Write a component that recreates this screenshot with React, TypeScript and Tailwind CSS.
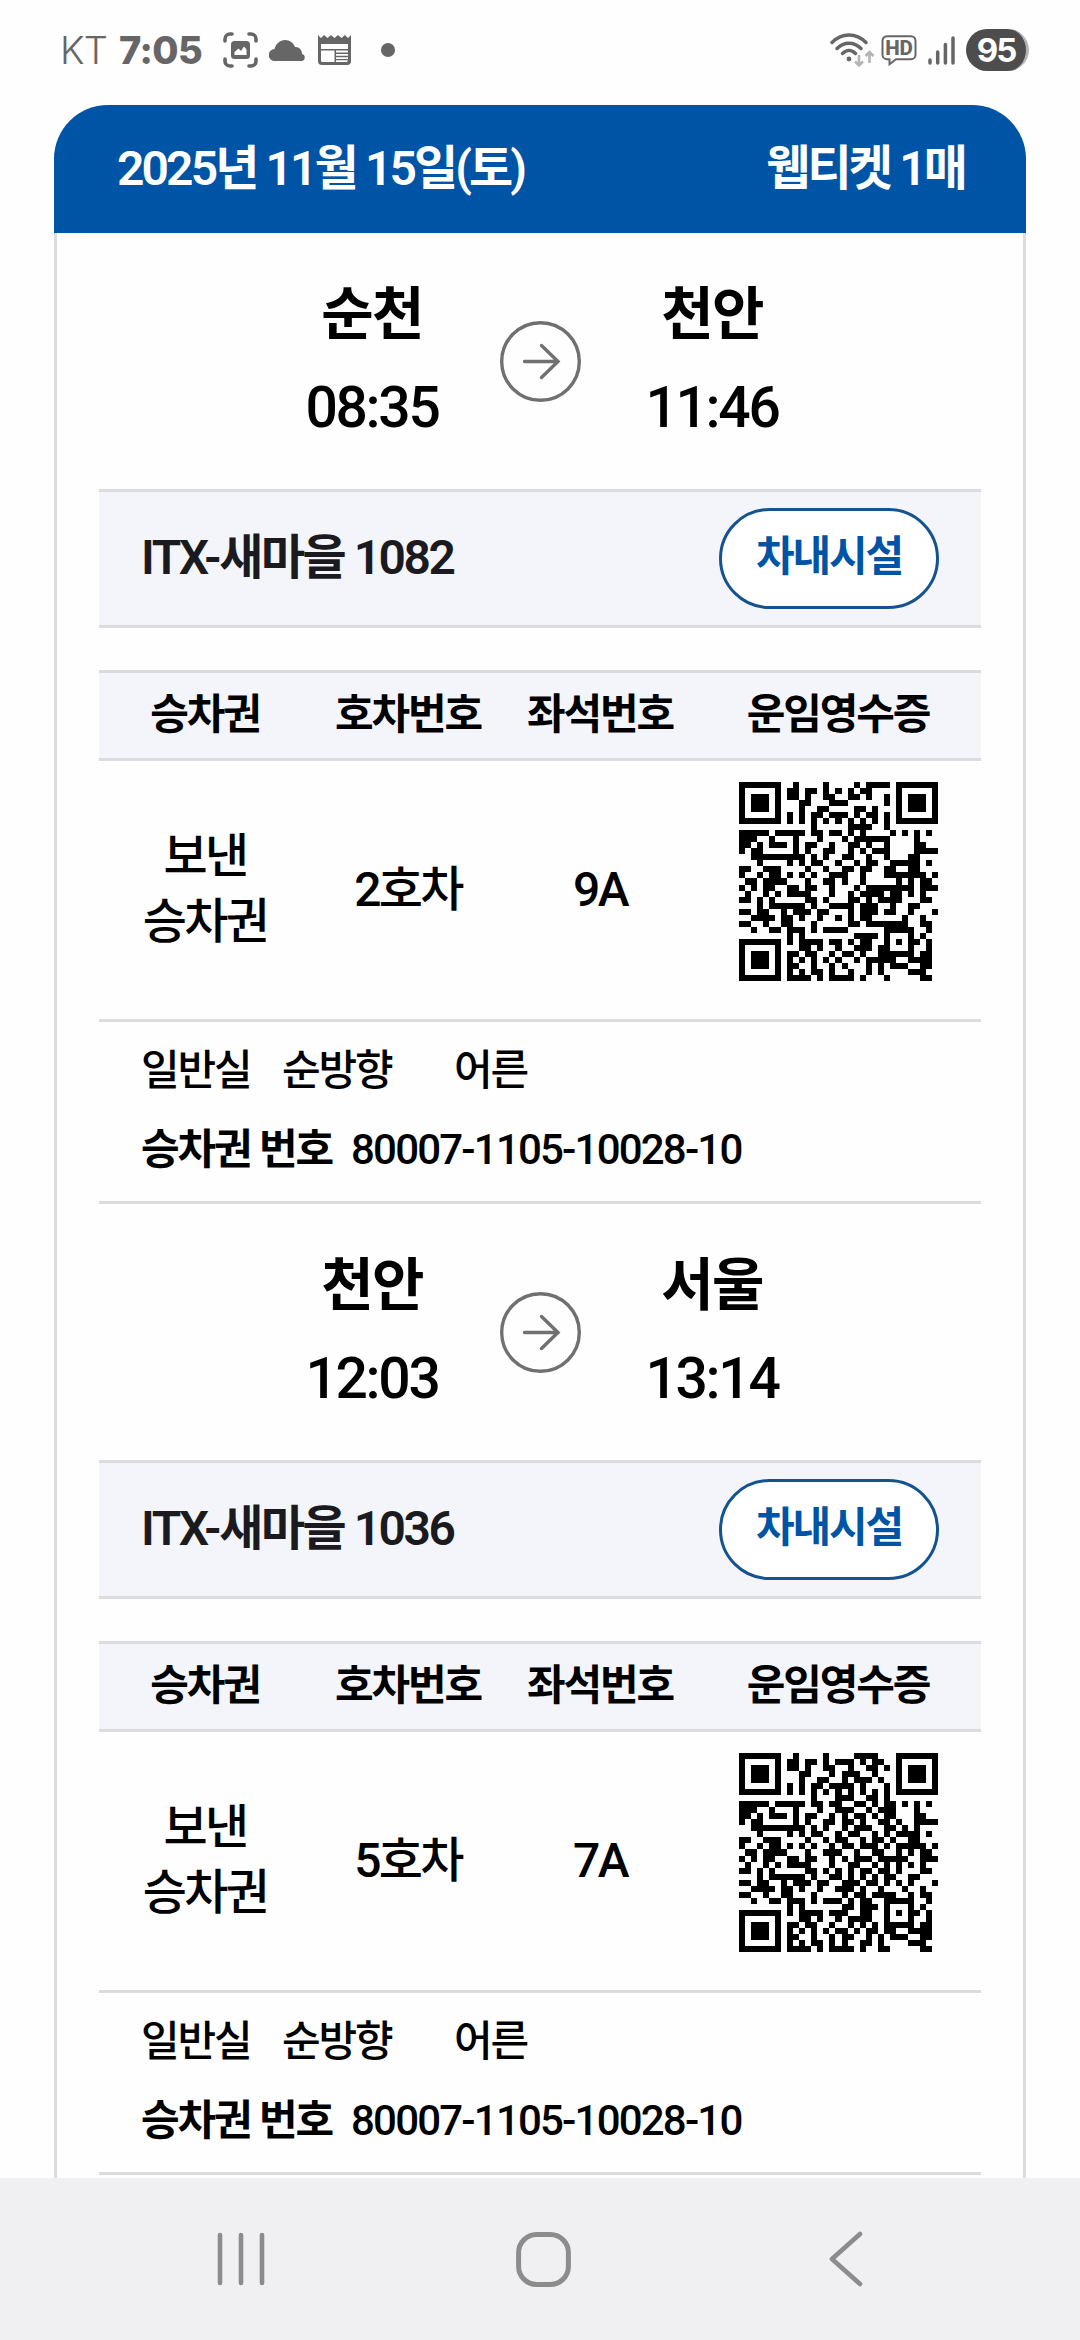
import React from "react";

type Ticket = {
  from: string;
  departure: string;
  to: string;
  arrival: string;
  train: string;
  car: string;
  seat: string;
  ticketNumber: string;
  qr: string[];
};

const QR_FIRST = [
  "#######..#....#....#.####.#######",
  "#.....#.##.##.#.#.#.##....#.....#",
  "#.###.#.##.#..##..##.#..#.#.###.#",
  "#.###.#...##...###......#.#.###.#",
  "#.###.#...#..##....##.#...#.###.#",
  "#.....#.#.#.##.###.#.##.#.#.....#",
  "#######.#.#.#.#.#.#.#.#.#.#######",
  "............#.....####..#........",
  "#####.#####.##.##.#.#....#.#.#.#.",
  "###..#...#...#...#.######....#...",
  "##.#.###.#.##..#..##.#..#....##..",
  "#.##.....#.#..##..#.#.###....####",
  "..#########.#.#..##..#..#...##...",
  "...#....#.#.##..#..#.##..#####.#.",
  "##..###....#..#..##.##..##..##...",
  "#..#.##.#.#.#..###..#...#######.#",
  ".##.####...#..##.#..#.....#.#.##.",
  "#.#.##..##.##..#...#.########.###",
  ".#..#.#.####...#..#.####.##.#.#..",
  "##.#.#.....##.#...##.#.####...##.",
  "...#.######.#..####.###..#..##...",
  "##.##..#.###.##...#.###.##..#...#",
  "..####.##.#..#..#.#.##.....#..#..",
  "##..#..##...#.....##.#######..##.",
  "..#..##.###.#.####......#####..#.",
  "........#.#........####.#...#.#..",
  "#######.#.####.##.#.##..#.#.##.#.",
  "#.....#...##.#..#..###.##...#..#.",
  "#.###.#.##.##..#.##.#..######.##.",
  "#.###.#.#.#.#.#.#..#.#####..####.",
  "#.###.#.##..#..#.#...#.#.###..##.",
  "#.....#.#.#.##.#..#..#.#....###..",
  "#######.####.#.####.#...#.....##.",
];

const QR_SECOND = [
  "#######..#....#....####...#######",
  "#.....#.##.##.#.###.#.##..#.....#",
  "#.###.#.##.#..##..#..##.#.#.###.#",
  "#.###.#...##...#.###..#...#.###.#",
  "#.###.#...#..##..#.###.#..#.###.#",
  "#.....#.#.#.##.####.#...#.#.....#",
  "#######.#.#.#.#.#.#.#.#.#.#######",
  "............#...###..##.#........",
  "#####.#####.##.##..##.#.##.#.#.#.",
  "###..#...#...#..###..#.###...#...",
  "##.#.###.#.##..#.#.##.#.##...##..",
  "#.##.....#.#..##.##.#..##.#..####",
  "..#########.#.#..#.###..##.#.#...",
  "...#....#.#.##..#.##..#.#.####.#.",
  "##..###....#..#.##..#.##.#..##...",
  "#..#.##.#.#.#..#.##.###.#.#####.#",
  ".##.####...#..###..#..##..#.#.##.",
  "#.#.##..##.##..#.#.###.#####..###",
  ".#..#.#.####...#..##..#.#.#.#.#..",
  "##.#.#.....##.#.#.#.##.##.#...##.",
  "...#.######.#..##.#.#.#.##..##...",
  "##.##..#.###.##..###.##.#.#.#...#",
  "..####.##.#..#..###.#..#...#..#..",
  "##..#..##...#....#.##.####..#.##.",
  "..#..##.###.#.###.#.##..#####..#.",
  "........#.#......##.###.#...#.#..",
  "#######.#.####.###..##..#.#.##.#.",
  "#.....#...##.#..#.####..#...#..#.",
  "#.###.#.##.##..#..#.#.#.#####.##.",
  "#.###.#.#.#.#.#.##.#.##.##..####.",
  "#.###.#.##..#..#.##..#.#.###..##.",
  "#.....#.#.#.##.#.#..##.#....###..",
  "#######.####.#.####.#..##.....##.",
];

const tickets: Ticket[] = [
  {
    from: "순천",
    departure: "08:35",
    to: "천안",
    arrival: "11:46",
    train: "ITX-새마을 1082",
    car: "2호차",
    seat: "9A",
    ticketNumber: "80007-1105-10028-10",
    qr: QR_FIRST,
  },
  {
    from: "천안",
    departure: "12:03",
    to: "서울",
    arrival: "13:14",
    train: "ITX-새마을 1036",
    car: "5호차",
    seat: "7A",
    ticketNumber: "80007-1105-10028-10",
    qr: QR_SECOND,
  },
];

const StatusBar: React.FC = () => (
  <div className="flex h-[105px] shrink-0 items-center justify-between pb-[5px] pl-[60px] pr-[51px] font-['Inter','Noto_Sans',sans-serif] text-[#666666]">
    <div className="flex items-center">
      <span className="w-[59px] text-[38px] font-light leading-none tracking-[-0.02em]">
        KT
      </span>
      <span className="w-[104px] text-[38px] font-extrabold leading-none tracking-[-0.015em]">
        7:05
      </span>
      <svg width="35" height="36" viewBox="0 0 35 36" fill="none">
        <path
          d="M2 9V7a5 5 0 0 1 5-5h2M26 2h2a5 5 0 0 1 5 5v2M33 27v2a5 5 0 0 1-5 5h-2M9 34H7a5 5 0 0 1-5-5v-2"
          stroke="currentColor"
          strokeWidth="3.6"
          strokeLinecap="round"
        />
        <rect x="8" y="9" width="19" height="18" rx="3.5" fill="currentColor" />
        <path
          d="M11.5 23v-3l4-3.5 2.5 2.5 3-4.500 2.500 3v5.500z"
          fill="white"
        />
      </svg>
      <svg width="37" height="21" viewBox="0 0 37 21" className="ml-[11px]">
        <path
          d="M6 21a6 6 0 0 1-.5-12C6.500 4 11 0 16 0c5 0 8.500 3 10 7 4-.5 7 2.500 7 7a3.600 3.600 0 0 1 0 7z"
          fill="currentColor"
        />
      </svg>
      <svg
        width="33"
        height="30"
        viewBox="0 0 33 30"
        fill="none"
        className="ml-3"
      >
        <path
          d="M0 0l3 3 3-3 3.500 3 3.500-3 3.500 3 3.500-3 3.500 3 3.500-3 3 3 3-3v26a4 4 0 0 1-4 4H4a4 4 0 0 1-4-4z"
          fill="currentColor"
        />
        <path
          d="M3 9h27v5H3zM3 15.500h13.500V27H4.500A1.500 1.500 0 0 1 3 25.500zM18 15.500h12v2H18zM18 19h12v1.800H18zM18 22.200h12V24H18zM18 25.300h12l-1 1.700H18z"
          fill="white"
        />
      </svg>
      <span className="ml-[30px] size-3.5 rounded-full bg-[#666666]" />
    </div>

    <div className="flex items-center">
      <svg width="46" height="36" viewBox="0 0 46 36" fill="none">
        <path
          d="M2 10.500C12 .5 26 .5 36 10.500M7 16.500c7-7 17-7 24 0M12.500 21.500c4-4 9-4 13 0"
          stroke="currentColor"
          strokeWidth="3.400"
          strokeLinecap="round"
        />
        <circle cx="19" cy="27" r="2.400" fill="currentColor" />
        <path
          d="M29 23v10M25 29.500l4 4 4-4M39.500 31V20M35.500 24l4-4 4 4"
          stroke="#b4b4b4"
          strokeWidth="2.600"
        />
      </svg>
      <svg
        width="36"
        height="31"
        viewBox="0 0 36 31"
        fill="none"
        className="ml-[5px]"
      >
        <path
          d="M6 1.200h24a4.500 4.500 0 0 1 4.500 4.500v14a4.500 4.500 0 0 1-4.500 4.500H15l-6.500 5v-5H6a4.500 4.500 0 0 1-4.500-4.500v-14A4.500 4.500 0 0 1 6 1.200z"
          stroke="currentColor"
          strokeWidth="2"
        />
        <text
          x="18"
          y="20"
          textAnchor="middle"
          fontSize="20.500"
          fontWeight="800"
          fontFamily="Roboto, sans-serif"
          fill="currentColor"
        >
          HD
        </text>
      </svg>
      <svg
        width="27"
        height="30"
        viewBox="0 0 27 30"
        fill="none"
        className="ml-[11px]"
      >
        <path
          d="M2 25v3M9.700 17v11M17.400 9.500V28M25 3v25"
          stroke="currentColor"
          strokeWidth="3.500"
          strokeLinecap="round"
        />
      </svg>
      <span className="ml-[11px] flex h-[42px] w-[63px] items-center justify-center overflow-hidden rounded-full border-r-[3px] border-[#b5b5b5] bg-[#4d4d4d] text-[33px] font-bold leading-none tracking-[-0.06em] text-white">
        95
      </span>
    </div>
  </div>
);

const QrCode: React.FC<{ rows: string[] }> = ({ rows }) => (
  <svg
    width="199"
    height="199"
    viewBox="0 0 33 33"
    shapeRendering="crispEdges"
  >
    {rows.map((row, y) =>
      row
        .split("")
        .map((cell, x) =>
          cell === "#" ? (
            <rect key={`${x}-${y}`} x={x} y={y} width="1" height="1" />
          ) : null
        )
    )}
  </svg>
);

const Station: React.FC<{ name: string; time: string }> = ({ name, time }) => (
  <div className="w-[150px] whitespace-nowrap text-center text-[57px] leading-[93px]">
    <p className="font-bold tracking-[-0.03em]">{name}</p>
    <p className="font-medium tracking-[-0.04em]">{time}</p>
  </div>
);

const TicketSection: React.FC<{ ticket: Ticket }> = ({ ticket }) => (
  <section className="px-[42px]">
    <div className="flex h-[256px] items-center pl-[198px]">
      <Station name={ticket.from} time={ticket.departure} />
      <svg
        width="81"
        height="81"
        viewBox="0 0 81 81"
        fill="none"
        stroke="#707070"
        strokeWidth="3.400"
        strokeLinecap="round"
        className="ml-[53px] mr-[56px]"
      >
        <circle cx="40.500" cy="40.500" r="38.800" />
        <path d="M24.500 40.500h33M41.500 24.500l16.500 16-16.500 16" />
      </svg>
      <Station name={ticket.to} time={ticket.arrival} />
    </div>

    <div className="flex h-[139px] items-center justify-between border-y-[3px] border-[#dcdcde] bg-[#f3f5fa] px-[42px]">
      <p className="pb-0.5 text-[48px] font-semibold tracking-[-0.052em] text-[#1b1b1f]">
        {ticket.train}
      </p>
      <button className="h-[101px] w-[220px] rounded-full border-[3px] border-[#14538f] bg-white pb-1 text-[42px] font-semibold tracking-[-0.05em] text-[#0054a6]">
        차내시설
      </button>
    </div>

    <div className="mt-[42px] grid h-[91px] grid-cols-[212px_194px_190px_286px] items-center border-y-[3px] border-[#dcdcde] bg-[#f3f5fa] pb-[3px] text-center text-[42px] font-semibold tracking-[-0.05em]">
      <span>승차권</span>
      <span>호차번호</span>
      <span>좌석번호</span>
      <span>운임영수증</span>
    </div>
    <div className="grid h-[261px] grid-cols-[212px_194px_190px_286px] items-center border-b-[3px] border-[#dcdcde] pb-0.5 text-center text-[48px] font-medium leading-[65px] tracking-[-0.055em]">
      <p>
        보낸
        <br />
        승차권
      </p>
      <p>{ticket.car}</p>
      <p>{ticket.seat}</p>
      <div className="flex justify-center pb-[15px]">
        <QrCode rows={ticket.qr} />
      </div>
    </div>

    <div className="h-[182px] border-b-[3px] border-[#dcdcde] pl-[42px] pt-[9px] text-[42px] font-medium leading-[79px] tracking-[-0.05em]">
      <div className="flex">
        <span className="w-[141px]">일반실</span>
        <span className="w-[172px]">순방향</span>
        <span>어른</span>
      </div>
      <div className="flex gap-[19px]">
        <span className="font-semibold">승차권 번호</span>
        <span className="tracking-[-0.043em]">{ticket.ticketNumber}</span>
      </div>
    </div>
  </section>
);

const NavigationBar: React.FC = () => (
  <div className="flex h-[162px] shrink-0 items-center bg-[#f0f0f2] pl-[217px]">
    <svg width="48" height="54" viewBox="0 0 48 54" fill="none">
      <path
        d="M3 3v48M24 3v48M45 3v48"
        stroke="#8c8c8c"
        strokeWidth="4.600"
        strokeLinecap="round"
      />
    </svg>
    <svg
      width="55"
      height="55"
      viewBox="0 0 55 55"
      fill="none"
      className="ml-[251px]"
    >
      <rect
        x="2.600"
        y="2.600"
        width="49.800"
        height="49.800"
        rx="18"
        stroke="#8c8c8c"
        strokeWidth="5"
      />
    </svg>
    <svg
      width="36"
      height="56"
      viewBox="0 0 36 56"
      fill="none"
      className="ml-[257px]"
    >
      <path
        d="M32 3L4 28l28 25"
        stroke="#8c8c8c"
        strokeWidth="4.600"
        strokeLinecap="round"
        strokeLinejoin="round"
      />
    </svg>
  </div>
);

const App: React.FC = () => {
  return (
    <div className="flex h-[2340px] w-[1080px] flex-col overflow-hidden bg-[#fefefe] font-['Roboto','Noto_Sans_CJK_KR',sans-serif] text-black">
      <StatusBar />

      <main className="min-h-0 flex-1 overflow-hidden px-[54px]">
        <header className="flex h-32 items-center justify-between rounded-t-[54px] bg-[#0054a6] pl-[63px] pr-[61px] text-[48px] font-semibold tracking-[-0.06em] text-white">
          <p>2025년 11월 15일(토)</p>
          <p>웹티켓 1매</p>
        </header>
        <div className="border-x-[3px] border-[#dcdcde]">
          {tickets.map((ticket) => (
            <TicketSection key={ticket.train} ticket={ticket} />
          ))}
          <div className="h-10" />
        </div>
      </main>

      <NavigationBar />
    </div>
  );
};

export default App;
